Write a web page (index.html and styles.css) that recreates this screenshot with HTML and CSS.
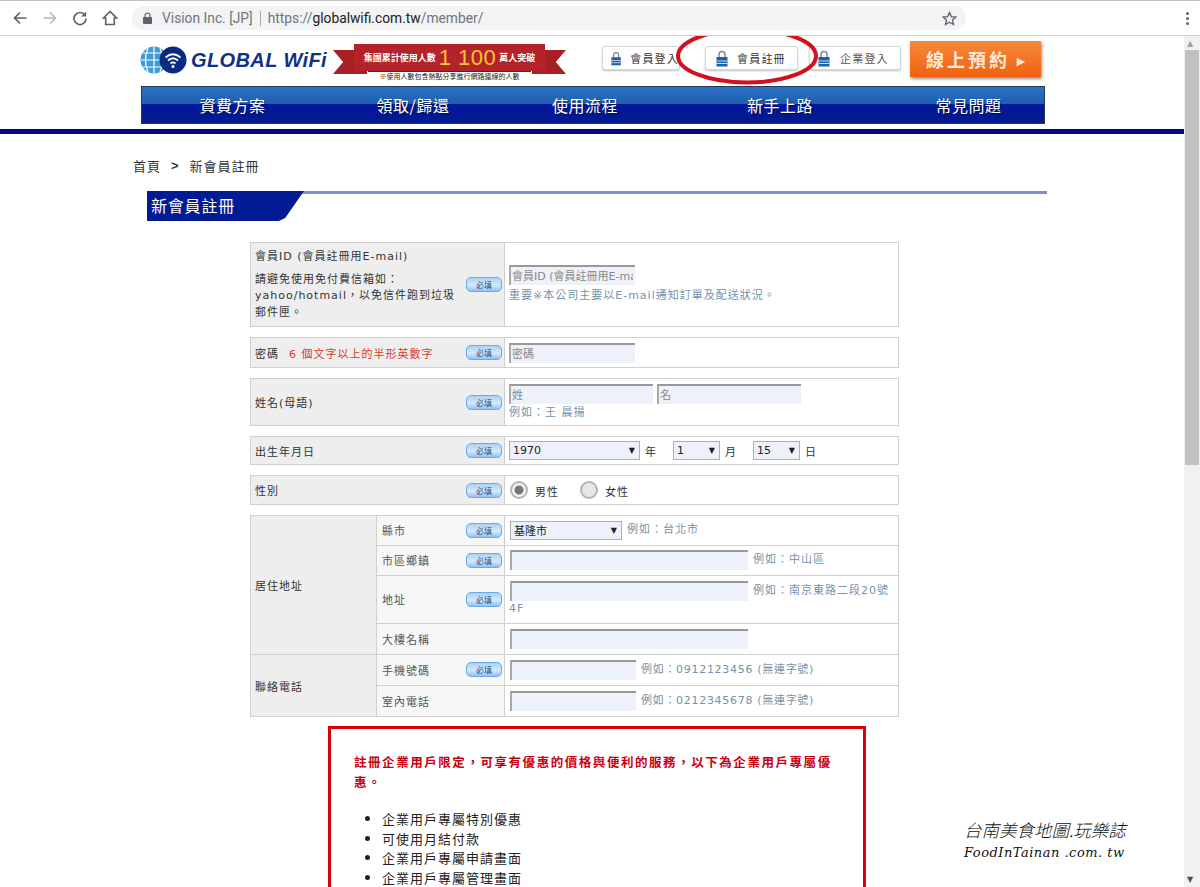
FILE: index.html
```html
<!DOCTYPE html>
<html>
<head>
    <meta charset="utf-8">
    <title>新會員註冊 - Global WiFi</title>
    <link rel="stylesheet" href="styles.css">
</head>
<body>
    <!-- Shared icons -->
    <svg class="defs" width="0" height="0">
        <symbol id="lock" viewBox="0 0 12 17">
            <path d="M3 8V4.5a3 3 0 0 1 6 0V8" fill="none" stroke="#7d8a98" stroke-width="1.5"/>
            <rect x="0.5" y="7" width="11" height="9.5" fill="#1d5fa8"/>
            <rect x="0.5" y="10.5" width="11" height="1" fill="#cfe0f0"/>
            <rect x="0.5" y="13" width="11" height="1" fill="#cfe0f0"/>
        </symbol>
    </svg>

    <!-- Browser toolbar -->
    <div class="chrome">
        <svg class="tool" width="16" height="16" viewBox="0 0 16 16"><path d="M14.5 8H2.5M8 2.5 2.5 8 8 13.5" fill="none" stroke="#5f6368" stroke-width="1.7"/></svg>
        <svg class="tool" width="16" height="16" viewBox="0 0 16 16"><path d="M1.5 8h12M8 2.5 13.5 8 8 13.5" fill="none" stroke="#b4b7bb" stroke-width="1.5"/></svg>
        <svg class="tool" width="16" height="16" viewBox="0 0 16 16"><path d="M13 5.2A6 6 0 1 0 14 8.5" fill="none" stroke="#5f6368" stroke-width="1.7"/><path d="M14.2 1.5v5h-5z" fill="#5f6368"/></svg>
        <svg class="tool" width="16" height="16" viewBox="0 0 16 16"><path d="M8 1.5 1.5 8h2.2v6.5h8.6V8h2.2zM8 1.5" fill="none" stroke="#5f6368" stroke-width="1.6"/></svg>
        <div class="omnibox">
            <svg width="9" height="12" viewBox="0 0 9 12"><path d="M2 5V3.5a2.5 2.5 0 0 1 5 0V5" fill="none" stroke="#5f6368" stroke-width="1.2"/><rect y="5" width="9" height="7" rx="1" fill="#5f6368"/></svg>
            <span class="site">Vision Inc. [JP]</span>
            <span class="sep"></span>
            <span class="url">https://<b>globalwifi.com.tw</b>/member/</span>
            <svg class="star" width="15" height="15" viewBox="0 0 16 16"><path d="M8 1.6 10 6l4.8.5-3.6 3.2 1 4.7L8 12l-4.2 2.4 1-4.7L1.200 6.500 6 6z" fill="none" stroke="#5f6368" stroke-width="1.400"/></svg>
        </div>
        <div class="dots"><i></i><i></i><i></i></div>
    </div>

    <div class="viewport">
        <div class="page">
            <!-- Site header -->
            <div class="header">
                <div class="top">
                    <div class="logo">
                        <svg width="48" height="30" viewBox="0 0 48 30">
                            <circle cx="14" cy="15" r="13.500" fill="#3f9bd8"/>
                            <path d="M1 15h27M3 8h22M3 22h22M14 1.500v27M8 3q-5 12 0 24M20 3q5 12 0 24" fill="none" stroke="#fff" stroke-width="1.200"/>
                            <circle cx="33" cy="15" r="13.500" fill="#0b2a82"/>
                            <path d="M25.500 12.500q7.500-6.500 15 0M28 15.500q5-4.500 10 0M30.500 18.500q2.500-2.200 5 0" fill="none" stroke="#fff" stroke-width="1.700"/>
                            <circle cx="33" cy="21.500" r="1.500" fill="#fff"/>
                        </svg>
                        <span class="logo-text">GLOBAL WiFi</span>
                    </div>
                    <div class="ribbon">
                        <div class="ribbon-band">
                            <span>集團累計使用人數</span><b>1 100</b><span>萬人突破</span>
                        </div>
                        <div class="ribbon-note">※使用人數包含熱點分享進行網路連線的人數</div>
                    </div>
                    <div class="top-buttons">
                        <a class="login login-member"><svg width="12" height="17"><use href="#lock"/></svg>會員登入</a>
                        <a class="login login-register"><svg width="12" height="17"><use href="#lock"/></svg>會員註冊</a>
                        <a class="login login-company"><svg width="12" height="17"><use href="#lock"/></svg>企業登入</a>
                    </div>
                    <a class="book">線上預約<span class="book-arrow">▸</span></a>
                </div>
                <div class="nav">
                    <a>資費方案</a>
                    <a>領取/歸還</a>
                    <a>使用流程</a>
                    <a>新手上路</a>
                    <a>常見問題</a>
                </div>
                <!-- Hand drawn circle round the register button -->
                <svg class="circle" width="146" height="60" viewBox="0 0 146 60">
                    <ellipse cx="73" cy="30" rx="69" ry="26.500" fill="none" stroke="#d3111c" stroke-width="4"/>
                </svg>
            </div>
            <div class="header-line"></div>

            <div class="crumbs"><span>首頁</span><b>&gt;</b><span>新會員註冊</span></div>

            <div class="title"><h1>新會員註冊</h1></div>

            <!-- Registration form -->
            <div class="form">
                <table class="row row-id">
                    <tr>
                        <th>
                            <div class="th-inner">
                                <div class="id-label">
                                    <div class="id-name">會員ID (會員註冊用E-mail)</div>
                                    <div class="id-note">請避免使用免付費信箱如：<br>yahoo/hotmail，以免信件跑到垃圾郵件匣。</div>
                                </div>
                                <span class="req">必填</span>
                            </div>
                        </th>
                        <td>
                            <input class="field w126" placeholder="會員ID (會員註冊用E-mail)">
                            <div class="hint hint-gap">重要※本公司主要以E-mail通知訂單及配送狀況。</div>
                        </td>
                    </tr>
                </table>

                <table class="row row-pass">
                    <tr>
                        <th><div class="th-inner"><span>密碼<em>6 個文字以上的半形英數字</em></span><span class="req">必填</span></div></th>
                        <td><input class="field w126" placeholder="密碼"></td>
                    </tr>
                </table>

                <table class="row row-name">
                    <tr>
                        <th><div class="th-inner"><span>姓名(母語)</span><span class="req">必填</span></div></th>
                        <td>
                            <div class="inline">
                                <input class="field w144" placeholder="姓">
                                <input class="field w144" placeholder="名">
                            </div>
                            <div class="hint name-hint">例如：王 晨揚</div>
                        </td>
                    </tr>
                </table>

                <table class="row row-birth">
                    <tr>
                        <th><div class="th-inner"><span>出生年月日</span><span class="req">必填</span></div></th>
                        <td>
                            <div class="inline birth">
                                <span class="select w130">1970</span><span class="unit">年</span>
                                <span class="select w46">1</span><span class="unit">月</span>
                                <span class="select w46">15</span><span class="unit">日</span>
                            </div>
                        </td>
                    </tr>
                </table>

                <table class="row row-gender">
                    <tr>
                        <th><div class="th-inner"><span>性別</span><span class="req">必填</span></div></th>
                        <td>
                            <div class="inline gender">
                                <span class="radio checked"></span><span>男性</span>
                                <span class="radio"></span><span>女性</span>
                            </div>
                        </td>
                    </tr>
                </table>

                <table class="row row-address">
                    <tr class="h30">
                        <th class="group" rowspan="4">居住地址</th>
                        <td class="sub"><div class="th-inner"><span>縣市</span><span class="req">必填</span></div></td>
                        <td>
                            <div class="inline">
                                <span class="select w112">基隆市</span><span class="hint">例如：台北市</span>
                            </div>
                        </td>
                    </tr>
                    <tr class="h30">
                        <td class="sub"><div class="th-inner"><span>市區鄉鎮</span><span class="req">必填</span></div></td>
                        <td><div class="inline"><input class="field w238"><span class="hint">例如：中山區</span></div></td>
                    </tr>
                    <tr class="h48">
                        <td class="sub"><div class="th-inner"><span>地址</span><span class="req">必填</span></div></td>
                        <td>
                            <div class="inline"><input class="field w238"><span class="hint">例如：南京東路二段20號</span></div>
                            <div class="hint">4F</div>
                        </td>
                    </tr>
                    <tr class="h31">
                        <td class="sub"><span>大樓名稱</span></td>
                        <td><input class="field w238"></td>
                    </tr>
                    <tr class="h31">
                        <th class="group" rowspan="2">聯絡電話</th>
                        <td class="sub"><div class="th-inner"><span>手機號碼</span><span class="req">必填</span></div></td>
                        <td><div class="inline"><input class="field w126"><span class="hint phone-hint">例如：0912123456 (無連字號)</span></div></td>
                    </tr>
                    <tr class="h31">
                        <td class="sub"><span>室內電話</span></td>
                        <td><div class="inline"><input class="field w126"><span class="hint phone-hint">例如：0212345678 (無連字號)</span></div></td>
                    </tr>
                </table>
            </div>

            <!-- Company benefits box -->
            <div class="notice">
                <p>註冊企業用戶限定，可享有優惠的價格與便利的服務，以下為企業用戶專屬優惠。</p>
                <ul>
                    <li>企業用戶專屬特別優惠</li>
                    <li>可使用月結付款</li>
                    <li>企業用戶專屬申請畫面</li>
                    <li>企業用戶專屬管理畫面</li>
                </ul>
            </div>

            <div class="watermark">
                <div>台南美食地圖.玩樂誌</div>
                <div class="watermark-url">FoodInTainan .com. tw</div>
            </div>
        </div>

        <div class="scrollbar">
            <span class="arrow">▲</span>
            <div class="thumb"></div>
            <span class="arrow arrow-down">▼</span>
        </div>
    </div>
</body>
</html>
```

FILE: styles.css
```css
* {
    box-sizing: border-box;
}

html, body {
    margin: 0;
    padding: 0;
    height: 100%;
    overflow: hidden;
    background-color: #fff;
}

body {
    font-family: "DejaVu Sans", "Noto Sans CJK TC", sans-serif;
    font-size: 11px;
    color: #333;
}

.defs {
    position: absolute;
}

/* Browser toolbar */
.chrome {
    height: 36px;
    display: flex;
    align-items: center;
    padding: 0 12px 0 12px;
    background-color: #fff;
    border-top: 1px solid #c4c4c4;
    border-bottom: 1px solid #cfcfcf;
}

.tool {
    margin-right: 14px;
    flex: none;
}

.omnibox {
    width: 834px;
    height: 24px;
    border-radius: 12px;
    background-color: #f1f3f4;
    display: flex;
    align-items: center;
    padding: 0 9px 0 11px;
    font-family: "Roboto", "Liberation Sans", sans-serif;
    font-size: 13.800px;
    color: #70757a;
}

.site {
    margin-left: 10px;
}

.sep {
    width: 1px;
    height: 15px;
    margin: 0 7px;
    background-color: #a8acb0;
}

.url b {
    font-weight: 400;
    color: #202124;
}

.star {
    margin-left: auto;
}

.dots {
    margin-left: auto;
    margin-right: -1px;
    display: flex;
    flex-direction: column;
    gap: 2px;
}

.dots i {
    width: 3px;
    height: 3px;
    border-radius: 50%;
    background-color: #5f6368;
}

/* Page and scrollbar */
.viewport {
    display: flex;
    height: 851px;
}

.page {
    position: relative;
    width: 1184px;
    height: 851px;
    overflow: hidden;
    flex: none;
}

.scrollbar {
    width: 16px;
    background-color: #f1f1f1;
    position: relative;
    padding-top: 14px;
    flex: none;
}

.thumb {
    width: 14px;
    height: 415px;
    margin-left: 1px;
    background-color: #c1c1c1;
}

.arrow {
    position: absolute;
    top: 3px;
    left: 3px;
    font-size: 8px;
    line-height: 10px;
    color: #a3a3a3;
}

.arrow-down {
    top: auto;
    bottom: 2px;
    color: #505050;
}

/* Site header */
.header {
    position: relative;
    margin-left: 140px;
    width: 906px;
}

.top {
    height: 50px;
    display: flex;
    align-items: flex-start;
}

.logo {
    display: flex;
    align-items: center;
    margin-top: 9px;
    width: 193px;
    flex: none;
}

.logo svg {
    flex: none;
}

.logo-text {
    margin-left: 3px;
    font-family: "Liberation Sans", sans-serif;
    font-weight: bold;
    font-style: italic;
    font-size: 20px;
    letter-spacing: 0.400px;
    color: #10308c;
    white-space: nowrap;
}

/* Red ribbon with tails */
.ribbon {
    position: relative;
    width: 233px;
    height: 42px;
    margin-top: 8px;
    flex: none;
}

.ribbon::before,
.ribbon::after {
    content: "";
    position: absolute;
    top: 6px;
    width: 34px;
    height: 24px;
    background-color: #a81f24;
}

.ribbon::before {
    left: 0;
    clip-path: polygon(0 0, 100% 0, 100% 100%, 0 100%, 30% 50%);
}

.ribbon::after {
    right: 0;
    clip-path: polygon(0 0, 100% 0, 70% 50%, 100% 100%, 0 100%);
}

.ribbon-band {
    position: absolute;
    z-index: 1;
    left: 21px;
    top: 0;
    width: 191px;
    height: 27px;
    background-color: #b5232a;
    color: #fff;
    font-family: "Noto Sans CJK TC", sans-serif;
    font-size: 9px;
    font-weight: 700;
    display: flex;
    align-items: center;
    justify-content: center;
    white-space: nowrap;
}

.ribbon-band b {
    font-family: "Liberation Sans", sans-serif;
    font-weight: 400;
    font-size: 22px;
    letter-spacing: 0.5px;
    margin: 0 3px;
    color: #f7c531;
}

.ribbon-note {
    position: absolute;
    z-index: 1;
    left: 35px;
    top: 27px;
    width: 163px;
    height: 10px;
    background-color: #fff;
    border-top: 1px solid #333;
    font-family: "Noto Sans CJK TC", sans-serif;
    font-size: 7px;
    line-height: 9px;
    text-align: center;
    white-space: nowrap;
    color: #222;
}

.top-buttons {
    display: flex;
    margin-top: 10px;
    margin-left: 36px;
    width: 299px;
    flex: none;
}

.login {
    height: 24px;
    display: flex;
    align-items: center;
    background-color: #fff;
    border: 1px solid #d5d8dc;
    border-radius: 3px;
    box-shadow: 0 1px 2px rgba(0, 0, 0, 0.25);
    font-family: "Noto Sans CJK TC", sans-serif;
    font-size: 11px;
    letter-spacing: 1.200px;
    white-space: nowrap;
    color: #333;
}

.login svg {
    margin: 0 9px 0 8px;
}

.login-member {
    width: 78px;
}

.login-register {
    width: 93px;
    margin-left: 25px;
}

.login-register svg {
    margin: 0 9px 0 10px;
}

.login-company {
    width: 92px;
    margin-left: 11px;
    color: #555;
}

.login-company svg {
    margin: 0 10px 0 8px;
}

.book {
    width: 131px;
    height: 36px;
    margin-top: 5px;
    margin-left: 9px;
    display: flex;
    align-items: center;
    justify-content: center;
    flex: none;
    background: linear-gradient(#f58a3a, #f2600f);
    box-shadow: 1px 2px 3px rgba(0, 0, 0, 0.45);
    font-family: "Noto Sans CJK TC", sans-serif;
    font-weight: 700;
    font-size: 18px;
    letter-spacing: 3px;
    color: #ffe9d8;
}

.book-arrow {
    margin-left: 7px;
    font-size: 15px;
    letter-spacing: 0;
}

.nav {
    margin-left: 1px;
    width: 904px;
    height: 38px;
    display: grid;
    grid-template-columns: 181px 180px 164px 226px 151px;
    border: 1px solid #2a3a52;
    background: linear-gradient(#2b72c4 0, #1d5fb0 47%, #03179a 48%, #021a8f 100%);
}

.nav a {
    font-family: "Noto Sans CJK TC", sans-serif;
    font-size: 16px;
    line-height: 36px;
    letter-spacing: 0.5px;
    text-align: center;
    color: #fff;
    text-shadow: 1px 1px 1px rgba(0, 0, 0, 0.5);
}

.circle {
    position: absolute;
    left: 534px;
    top: -10px;
}

.header-line {
    height: 5px;
    margin-top: 5px;
    background-color: #000c80;
}

/* Breadcrumb */
.crumbs {
    margin: 23px 0 0 133px;
    height: 18px;
    display: flex;
    gap: 10px;
    font-family: "Noto Sans CJK TC", sans-serif;
    font-size: 13px;
    line-height: 18px;
    letter-spacing: 1px;
    color: #333;
}

.crumbs b {
    font-family: "Liberation Sans", sans-serif;
    margin: 0;
}

/* Section title */
.title {
    margin: 16px 0 0 147px;
    width: 900px;
    height: 30px;
    background: linear-gradient(#7c8fd0, #7c8fd0) no-repeat 0 0 / 100% 3px;
}

.title h1 {
    margin: 0;
    width: 157px;
    height: 30px;
    padding-left: 4px;
    background-color: #001b93;
    clip-path: polygon(0 0, 100% 0, 92% 60%, 88% 90%, 84% 100%, 0 100%);
    font-family: "Noto Sans CJK TC", sans-serif;
    font-size: 16px;
    font-weight: 400;
    line-height: 29px;
    letter-spacing: 0.800px;
    color: #fff;
}

/* Form tables */
.form {
    margin: 21px 0 0 250px;
    width: 650px;
    display: flex;
    flex-direction: column;
    gap: 10px;
}

.row {
    width: 649px;
    border-collapse: collapse;
    table-layout: fixed;
}

.row th,
.row td {
    border: 1px solid #d0d0d0;
    padding: 0 0 0 4px;
    font-weight: 400;
    text-align: left;
    vertical-align: middle;
    letter-spacing: 1px;
}

.row > tbody > tr > th {
    width: 254px;
    background-color: #eeeeee;
    color: #333;
}

.row-address th.group {
    width: 126px;
}

.row-address td {
    padding-bottom: 1px;
}

.row-address td.sub {
    width: 128px;
    padding-left: 5px;
    background-color: #f7f7f7;
    color: #555;
}

.row-id { height: 85px; }
.row-pass { height: 31px; }
.row-name { height: 48px; }
.row-birth { height: 29px; }
.row-gender { height: 30px; }

.row-id td {
    padding-bottom: 1px;
}

.h30 { height: 30px; }
.h31 { height: 31px; }
.h48 { height: 48px; }

.th-inner {
    display: flex;
    align-items: center;
    justify-content: space-between;
    padding-right: 2px;
}

.id-label {
    width: 206px;
}

.id-name {
    line-height: 18px;
    margin-bottom: 6px;
}

.id-note {
    line-height: 16.500px;
}

.row em {
    margin-left: 10px;
    font-style: normal;
    color: #d8392f;
}

.req {
    width: 36px;
    height: 15px;
    flex: none;
    border: 1px solid #6ea9e6;
    border-radius: 5px;
    background: linear-gradient(#a9d2f7, #d6e9fb 55%, #8fc2f3);
    font-family: "Noto Sans CJK TC", sans-serif;
    font-size: 8px;
    line-height: 13px;
    letter-spacing: 0;
    text-align: center;
    color: #1d4f8f;
}

.field {
    display: block;
    height: 20px;
    padding: 1px 2px 0 1px;
    border: 0;
    border-top: 2px solid #999;
    border-left: 2px solid #aaa;
    background-color: #edf2fa;
    font-family: "DejaVu Sans", "Noto Sans CJK TC", sans-serif;
    font-size: 11px;
    flex: none;
}

.field::placeholder {
    color: #888;
}

.w126 { width: 126px; }
.w144 { width: 144px; }
.w238 { width: 238px; }

.row-address td > .w238 {
    margin-left: 1px;
}

.hint {
    color: #7393ac;
    line-height: 16px;
    white-space: nowrap;
}

.hint-gap {
    margin-top: 3px;
}

.name-hint {
    margin-top: 1px;
}

.phone-hint {
    letter-spacing: 0.700px;
}

.inline {
    display: flex;
    align-items: center;
    gap: 4px;
}

.row-address .inline,
.gender {
    margin-left: 1px;
}

.inline .hint {
    margin-left: 1px;
}

.select {
    height: 19px;
    display: flex;
    align-items: center;
    justify-content: space-between;
    padding: 0 4px 0 3px;
    border: 1px solid #aab0b8;
    background-color: #edf2fa;
    font-size: 11px;
    letter-spacing: 0;
    color: #222;
    flex: none;
}

.select::after {
    content: "▼";
    font-size: 8px;
    color: #222;
}

.w130 { width: 131px; }
.w46 { width: 47px; }
.w112 { width: 112px; }

.birth .unit {
    margin-right: 12px;
    margin-left: 1px;
}

.birth .unit:last-child {
    margin-right: 0;
}

.gender {
    gap: 0;
}

.gender span:nth-child(2) {
    margin: 2px 21px 0 7px;
}

.gender span:nth-child(4) {
    margin: 2px 0 0 7px;
}

.radio {
    width: 18px;
    height: 18px;
    border-radius: 50%;
    border: 2px solid #b4b4b4;
    background-color: #e6e6e6;
    flex: none;
}

.radio.checked {
    background: radial-gradient(circle, #777 0, #777 4px, #f2f2f2 5px);
}

/* Company benefits box */
.notice {
    margin: 9px 0 0 328px;
    width: 538px;
    height: 300px;
    padding: 23px 23px;
    border: 3px solid #d8000f;
    font-family: "Noto Sans CJK TC", sans-serif;
    font-size: 13px;
    color: #222;
}

.notice p {
    margin: 0 0 17px;
    font-size: 12.500px;
    font-weight: 700;
    line-height: 20px;
    letter-spacing: 1.550px;
    color: #c90012;
}

.notice ul {
    margin: 0;
    padding-left: 28px;
}

.notice li {
    line-height: 19.700px;
    letter-spacing: 1px;
}

/* Blog watermark */
.watermark {
    position: absolute;
    left: 964px;
    top: 782px;
    width: 170px;
    font-family: "Noto Sans CJK TC", sans-serif;
    font-weight: 300;
    font-style: italic;
    font-size: 17.500px;
    line-height: 23px;
    white-space: nowrap;
    color: #111;
}

.watermark-url {
    font-family: "DejaVu Serif", serif;
    font-size: 13px;
    letter-spacing: 0.500px;
}
```
